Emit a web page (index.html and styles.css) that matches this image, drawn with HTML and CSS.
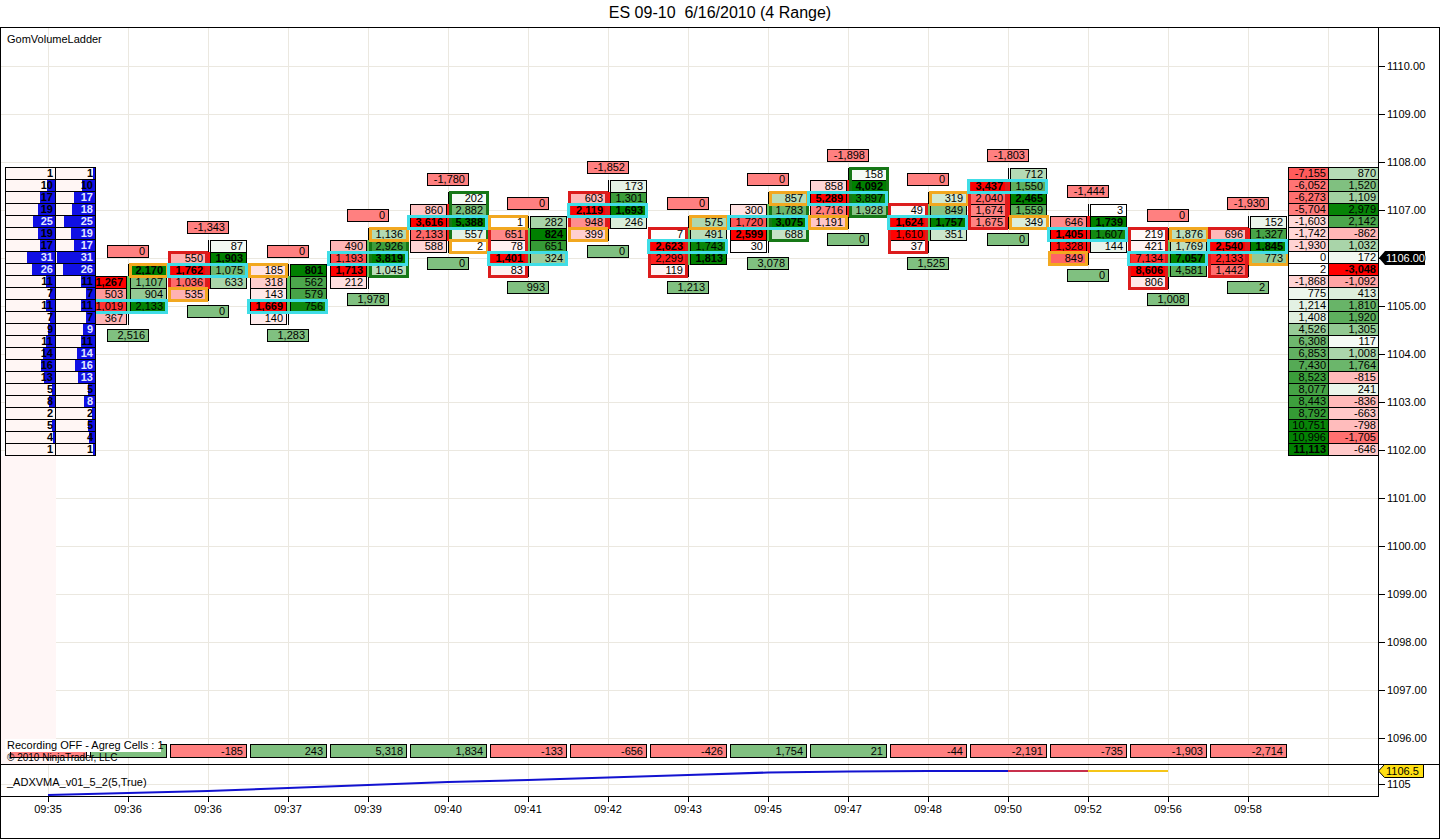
FILE: index.html
```html
<!DOCTYPE html>
<html>
<head>
<meta charset="utf-8">
<title>ES 09-10 6/16/2010 (4 Range)</title>
<link rel="stylesheet" href="styles.css">
</head>
<body>
<div class="window">
  <div class="title">ES 09-10&nbsp; 6/16/2010 (4 Range)</div>
  <div class="frame">
    <div class="main">
      <div class="plot" id="plot">
        <div class="panel-label">GomVolumeLadder</div>
        <div class="pink-strip"></div>
        <div class="copyright">© 2010 NinjaTrader, LLC</div>
        <div class="recording">Recording OFF - Agreg Cells : 1</div>
      </div>
      <div class="axis" id="axis">
        <div class="pl">1110.00</div>
        <div class="pl">1109.00</div>
        <div class="pl">1108.00</div>
        <div class="pl">1107.00</div>
        <div class="pl">1106.00</div>
        <div class="pl">1105.00</div>
        <div class="pl">1104.00</div>
        <div class="pl">1103.00</div>
        <div class="pl">1102.00</div>
        <div class="pl">1101.00</div>
        <div class="pl">1100.00</div>
        <div class="pl">1099.00</div>
        <div class="pl">1098.00</div>
        <div class="pl">1097.00</div>
        <div class="pl">1096.00</div>
        <svg class="last-price" width="46" height="14" viewBox="0 0 46 14">
          <polygon points="0,7 6,0 46,0 46,14 6,14" fill="#000"/>
          <text x="7" y="11" fill="#fff" font-family="Liberation Sans, Arial, sans-serif" font-size="11">1106.00</text>
        </svg>
      </div>
    </div>
    <div class="sub">
      <div class="subplot">
        <div class="panel-label">_ADXVMA_v01_5_2(5,True)</div>
        <svg class="adx" width="1377" height="31" viewBox="0 0 1377 31">
          <polyline fill="none" stroke="#1212d0" stroke-width="2" points="47,30 127,28 207,26 287,23 367,20 447,17 527,15 607,12.5 687,10 767,7.5 847,6.5 927,6 1007,6"/>
          <polyline fill="none" stroke="#c8304c" stroke-width="2" points="1007,6 1087,6"/>
          <polyline fill="none" stroke="#f5c518" stroke-width="2" points="1087,6 1167,6"/>
        </svg>
      </div>
      <div class="subaxis">
        <svg class="adx-price" width="46" height="14" viewBox="0 0 46 14">
          <polygon points="0.5,7 6.5,0.5 45.5,0.5 45.5,13.5 6.5,13.5" fill="#ffe014" stroke="#000" stroke-width="1"/>
          <text x="8" y="11" fill="#000" font-family="Liberation Sans, Arial, sans-serif" font-size="11">1106.5</text>
        </svg>
        <div class="sub-tick">1105</div>
      </div>
    </div>
    <div class="xaxis">
      <div class="tl">09:35</div>
      <div class="tl">09:36</div>
      <div class="tl">09:36</div>
      <div class="tl">09:37</div>
      <div class="tl">09:39</div>
      <div class="tl">09:40</div>
      <div class="tl">09:41</div>
      <div class="tl">09:42</div>
      <div class="tl">09:43</div>
      <div class="tl">09:45</div>
      <div class="tl">09:47</div>
      <div class="tl">09:48</div>
      <div class="tl">09:50</div>
      <div class="tl">09:52</div>
      <div class="tl">09:56</div>
      <div class="tl">09:58</div>
    </div>
  </div>
</div>
<script src="script.js"></script>
</body>
</html>
```

FILE: styles.css
```css
* { box-sizing: border-box; }
body {
  margin: 0;
  background: #fff;
  font-family: "Liberation Sans", Arial, sans-serif;
  font-size: 11px;
  color: #000;
}
.window { width: 1440px; height: 840px; overflow: hidden; }
.title {
  height: 27px;
  line-height: 26px;
  text-align: center;
  font-size: 16px;
}
.frame {
  height: 812px;
  border: 1px solid #000;
  display: flex;
  flex-direction: column;
}
.main {
  height: 737px;
  display: flex;
  border-bottom: 1px solid #000;
}
.plot {
  position: relative;
  width: 1378px;
  flex: none;
  border-right: 1px solid #000;
  overflow: hidden;
  padding: 5px 6px;
  background-color: #fff;
  background-image:
    linear-gradient(to right, #ebe8e0 1px, transparent 1px),
    linear-gradient(to bottom, #ebe8e0 1px, transparent 1px);
  background-size: 80px 100%, 100% 48px;
  background-position: 47px 0, 0 38px;
}
.panel-label { position: relative; line-height: 13px; white-space: nowrap; }
.pink-strip {
  position: absolute;
  left: 0; top: 428px;
  width: 55px; height: 310px;
  background: #fff6f6;
}
.copyright {
  position: absolute;
  left: 6px; top: 724px;
  font-size: 10px;
  line-height: 11px;
  z-index: 4;
  white-space: nowrap;
}
.recording {
  position: absolute;
  left: 4px; top: 711px;
  width: 156px; height: 13px;
  line-height: 13px;
  padding-left: 2px;
  background: #fff;
  z-index: 5;
  white-space: nowrap;
}

/* price axis */
.axis {
  flex: 1;
  position: relative;
  display: flex;
  flex-direction: column;
  padding-top: 14px;
}
.pl {
  height: 48px;
  flex: none;
  display: flex;
  align-items: center;
  padding-left: 8px;
  position: relative;
}
.pl::before {
  content: "";
  position: absolute;
  left: 0; top: 24px;
  width: 6px; height: 1px;
  background: #000;
}
.last-price { position: absolute; left: 0; top: 223px; }

/* lower panel */
.sub { height: 32px; display: flex; flex: none; }
.subplot {
  width: 1378px;
  flex: none;
  position: relative;
  border-right: 1px solid #000;
  border-bottom: 1px solid #000;
  padding: 11px 6px 0;
  background-image:
    linear-gradient(to right, #ebe8e0 1px, transparent 1px),
    linear-gradient(to bottom, #ebe8e0 1px, transparent 1px);
  background-size: 80px 100%, 100% 48px;
  background-position: 47px 0, 0 19px;
  background-repeat: repeat-x, no-repeat;
}
.adx { position: absolute; left: 0; top: 0; }
.subaxis { flex: 1; position: relative; overflow: visible; }
.adx-price { position: absolute; left: -1px; top: -1px; z-index: 2; }
.sub-tick {
  position: absolute;
  left: 0; top: 13px;
  height: 13px;
  line-height: 13px;
  padding-left: 8px;
}
.sub-tick::before {
  content: "";
  position: absolute;
  left: 0; top: 6px;
  width: 6px; height: 1px;
  background: #000;
}

/* time axis */
.xaxis {
  flex: 1;
  display: flex;
  padding-left: 7px;
}
.tl {
  width: 80px;
  flex: none;
  text-align: center;
  padding-top: 6px;
  line-height: 13px;
  position: relative;
}
.tl::before {
  content: "";
  position: absolute;
  left: 40px; top: 0;
  width: 1px; height: 5px;
  background: #000;
}

/* chart items */
.cell {
  position: absolute;
  width: 37px;
  height: 13px;
  border: 1px solid #000;
  text-align: right;
  padding-right: 3px;
  line-height: 11px;
  white-space: nowrap;
  overflow: hidden;
}
.cell.max { font-weight: bold; }
.wick { position: absolute; width: 1px; background: #000; }
.body { position: absolute; width: 9px; }
.body.up { background: #5cc45c; }
.body.dn { background: #f01414; }
.hl { position: absolute; border: 3px solid; }
.hl.red { border-color: #dc1c1c; }
.hl.green { border-color: #167816; }
.hl.orange { border-color: #f2a820; }
.hl.cyan { border-color: #40dde6; }
.delta {
  position: absolute;
  border: 1px solid #000;
  text-align: right;
  padding-right: 3px;
  line-height: 11px;
  white-space: nowrap;
}
.delta.row { line-height: 12px; }
.delta.neg { background: #ff8080; }
.delta.pos { background: #80c080; }

/* ladders */
.ladder {
  position: absolute;
  display: grid;
  grid-auto-rows: 12px;
  border-top: 1px solid #000;
  border-left: 1px solid #000;
  z-index: 3;
}
.ladder.left { grid-template-columns: 50px 40px; }
.ladder.right { grid-template-columns: 40px 50px; }
.lc {
  border-right: 1px solid #000;
  border-bottom: 1px solid #000;
  text-align: right;
  padding-right: 2px;
  line-height: 11px;
  white-space: nowrap;
  overflow: hidden;
}
.ladder.left .lc {
  font-weight: bold;
  background: linear-gradient(to left, #1010e4 var(--w), #fff6f4 var(--w));
}
.ladder.left .lc.lt { color: #e2e8ff; }
.ladder.right .lc.max { font-weight: bold; }
```

FILE: script.js
```javascript
(function () {
  var PX = 1, PY = 28;
  var plot = document.getElementById('plot');
  function yc(t) { return 66 + 12 * t; }
  function fmt(n) {
    var a = Math.abs(n).toString().replace(/\B(?=(\d{3})+(?!\d))/g, ',');
    return (n < 0 ? '-' : '') + a;
  }
  var RED = [255, 0, 0], GREEN = [0, 128, 0];
  function tint(rgb, f) {
    return 'rgb(' + rgb.map(function (v) { return Math.round(255 + (v - 255) * f); }).join(',') + ')';
  }
  function add(cls, x, y, w, h, text, bg) {
    var d = document.createElement('div');
    d.className = cls;
    d.style.left = (x - PX) + 'px';
    d.style.top = (y - PY) + 'px';
    if (w != null) d.style.width = w + 'px';
    if (h != null) d.style.height = h + 'px';
    if (bg) d.style.background = bg;
    if (text != null) d.textContent = text;
    plot.appendChild(d);
    return d;
  }

  var bars = [
    {c:128,t:17,up:1,bid:[0,1267,503,1019,367],ask:[2170,1107,904,2133,0],poc:3,or:['a',0],dt:'0',db:'2,516'},
    {c:208,t:15,up:0,bid:[0,550,1762,1036,535],ask:[87,1903,1075,633,0],poc:2,or:['b',4],rc:[1,3],dt:'-1,343',db:'0'},
    {c:288,t:17,up:1,bid:[185,318,143,1669,140],ask:[801,562,579,756,0],poc:3,or:['b',0],dt:'0',db:'1,283'},
    {c:368,t:14,up:1,bid:[0,490,1193,1713,212],ask:[1136,2926,3819,1045,0],poc:2,or:['a',0],gc:[1,3],dt:'0',db:'1,978'},
    {c:448,t:11,up:0,bid:[0,860,3616,2133,588],ask:[202,2882,5388,557,2],poc:2,or:['a',4],gc:[0,3],dt:'-1,780',db:'0'},
    {c:528,t:13,up:1,bid:[1,651,78,1401,83],ask:[282,824,651,324,0],poc:3,or:['b',0],rc:[1,4],dt:'0',db:'993'},
    {c:608,t:10,up:0,bid:[0,603,2119,948,399],ask:[173,1301,1693,246,0],poc:2,or:['b',4],rc:[1,3],dt:'-1,852',db:'0'},
    {c:688,t:13,up:1,bid:[0,7,2623,2299,119],ask:[575,491,1743,1813,0],poc:2,or:['a',0],rc:[1,4],dt:'0',db:'1,213'},
    {c:768,t:11,up:1,bid:[0,300,1720,2599,30],ask:[857,1783,3075,688,0],poc:2,or:['a',0],gc:[1,3],dt:'0',db:'3,078'},
    {c:848,t:9,up:0,bid:[0,858,5289,2716,1191],ask:[158,4092,3897,1928,0],poc:2,or:['b',4],gc:[0,3],dt:'-1,898',db:'0'},
    {c:928,t:11,up:1,bid:[0,49,1624,1610,37],ask:[319,849,1757,351,0],poc:2,or:['a',0],rc:[1,4],dt:'0',db:'1,525'},
    {c:1008,t:9,up:0,bid:[0,3437,2040,1674,1675],ask:[712,1550,2465,1559,349],poc:1,or:['a',4],rc:[1,4],dt:'-1,803',db:'0'},
    {c:1088,t:12,up:0,bid:[0,646,1405,1328,849],ask:[3,1739,1607,144,0],poc:2,or:['b',4],dt:'-1,444',db:'0'},
    {c:1168,t:14,up:1,bid:[219,421,7134,8606,806],ask:[1876,1769,7057,4581,0],poc:2,or:['a',0],rc:[0,4],dt:'0',db:'1,008'},
    {c:1248,t:13,up:0,bid:[0,696,2540,2133,1442],ask:[152,1327,1845,773,0],poc:2,or:['a',3],rc:[1,4],dt:'-1,930',db:'2'}
  ];

  // bottom delta row (first two sit under the recording label)
  var rowVals = [-1, 1, -185, 243, 5318, 1834, -133, -656, -426, 1754, 21, -44, -2191, -735, -1903, -2714];
  rowVals.forEach(function (v, i) {
    var c = 48 + 80 * i;
    add('delta row ' + (v < 0 ? 'neg' : 'pos'), c - 38, 744, 77, 14, i < 2 ? null : fmt(v));
  });

  bars.forEach(function (b) {
    var t = b.t, c = b.c;
    add('wick', c, yc(t) - 6, 1, 4 * 12 + 13);
    add('body ' + (b.up ? 'up' : 'dn'), c - 4, yc(t + 1) - 6, null, 3 * 12 + 1);
    var bmax = Math.max.apply(null, b.bid), amax = Math.max.apply(null, b.ask);
    b.bid.forEach(function (v, i) {
      if (!v) return;
      var d = add('cell', c - 38, yc(t + i) - 6, null, null, fmt(v), tint(RED, v / bmax));
      if (v === bmax) d.classList.add('max');
    });
    b.ask.forEach(function (v, i) {
      if (!v) return;
      var d = add('cell', c + 2, yc(t + i) - 6, null, null, fmt(v), tint(GREEN, v / amax));
      if (v === amax) d.classList.add('max');
    });
    if (b.rc) add('hl red', c - 40, yc(t + b.rc[0]) - 7, 40, (b.rc[1] - b.rc[0]) * 12 + 15);
    if (b.gc) add('hl green', c + 1, yc(t + b.gc[0]) - 7, 40, (b.gc[1] - b.gc[0]) * 12 + 15);
    if (b.or) add('hl orange', b.or[0] === 'b' ? c - 40 : c + 1, yc(t + b.or[1]) - 7, 40, 15);
    add('hl cyan', c - 41, yc(t + b.poc) - 7, 81, 15);
    add('delta neg', c - 21, yc(t) - 25, 42, 13, b.dt);
    add('delta pos', c - 21, yc(t + 4) + 11, 42, 13, b.db);
  });

  // left volume ladder
  var l1 = [1,10,17,19,25,19,17,31,26,11,7,11,7,9,11,14,16,13,5,8,2,5,4,1];
  var l2 = [1,10,17,18,25,19,17,31,26,11,7,11,7,9,11,14,16,13,5,8,2,5,4,1];
  var light1 = [4,7,8], light2 = [2,3,4,5,6,7,8,13,15,16,17,19];
  var left = document.createElement('div');
  left.className = 'ladder left';
  left.style.left = (5 - PX) + 'px';
  left.style.top = (167 - PY) + 'px';
  for (var i = 0; i < l1.length; i++) {
    var a = document.createElement('div');
    a.className = 'lc' + (light1.indexOf(i) >= 0 ? ' lt' : '');
    a.style.setProperty('--w', Math.max(0, 0.95 * l1[i] - 1.5).toFixed(1) + 'px');
    a.textContent = l1[i];
    left.appendChild(a);
    var b2 = document.createElement('div');
    b2.className = 'lc' + (light2.indexOf(i) >= 0 ? ' lt' : '');
    b2.style.setProperty('--w', (1.2 * l2[i] + 1).toFixed(1) + 'px');
    b2.textContent = l2[i];
    left.appendChild(b2);
  }
  plot.appendChild(left);

  // right delta ladder
  var r1 = [-7155,-6052,-6273,-5704,-1603,-1742,-1930,0,2,-1868,775,1214,1408,4526,6308,6853,7430,8523,8077,8443,8792,10751,10996,11113];
  var r2 = [870,1520,1109,2979,2142,-862,1032,172,-3048,-1092,413,1810,1920,1305,117,1008,1764,-815,241,-836,-663,-798,-1705,-646];
  function maxAbs(arr) { return Math.max.apply(null, arr.map(Math.abs)); }
  var m1 = maxAbs(r1), m2 = maxAbs(r2);
  var right = document.createElement('div');
  right.className = 'ladder right';
  right.style.left = (1288 - PX) + 'px';
  right.style.top = (167 - PY) + 'px';
  function rcell(v, m) {
    var d = document.createElement('div');
    d.className = 'lc' + (Math.abs(v) === m ? ' max' : '');
    d.style.background = tint(v < 0 ? RED : GREEN, Math.abs(v) / m);
    d.textContent = fmt(v);
    right.appendChild(d);
  }
  for (var j = 0; j < r1.length; j++) { rcell(r1[j], m1); rcell(r2[j], m2); }
  plot.appendChild(right);
})();
```
